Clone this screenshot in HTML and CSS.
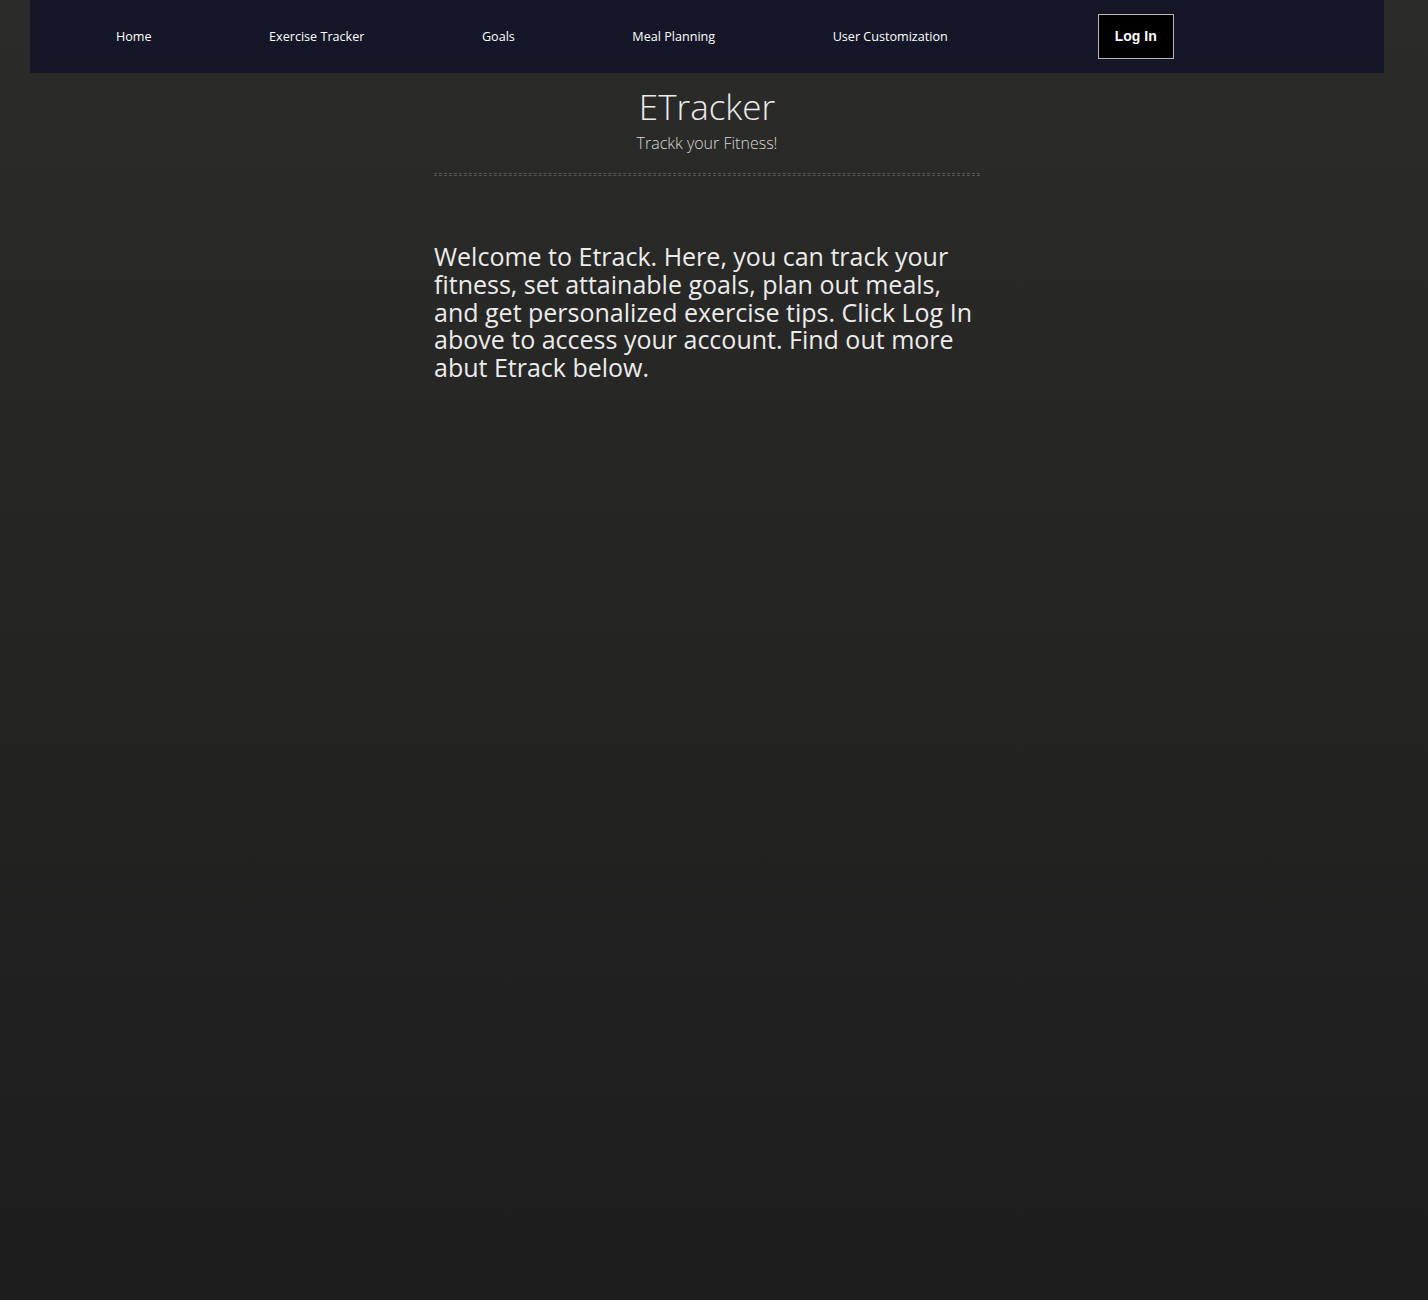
FILE: index.html
```html
<!DOCTYPE html>
<html>
<head>
<meta charset="utf-8">
<link rel="stylesheet" href="styles.css">
</head>
<body>
<div class="page">
  <nav class="nav">
    <a class="nav-link" href="#">Home</a>
    <a class="nav-link" href="#">Exercise Tracker</a>
    <a class="nav-link" href="#">Goals</a>
    <a class="nav-link" href="#">Meal Planning</a>
    <a class="nav-link" href="#">User Customization</a>
    <a class="login" href="#">Log In</a>
  </nav>
  <header class="header">
    <h1 class="title">ETracker</h1>
    <p class="subtitle">Trackk your Fitness!</p>
    <div class="divider"></div>
  </header>
  <main class="main">
    <p class="intro">Welcome to Etrack. Here, you can track your fitness, set attainable goals, plan out meals, and get personalized exercise tips. Click Log In above to access your account. Find out more abut Etrack below.</p>
  </main>
</div>
</body>
</html>
```

FILE: styles.css
```css
html {
  min-height: 100%;
  background: linear-gradient(to bottom, #2b2b29 0%, #1d1d1d 100%);
}
body {
  margin: 0;
  min-height: 1300px;
  font-family: "Open Sans", "DejaVu Sans", sans-serif;
  color: #e8e8e8;
}
.page {
  margin: 0 44px 0 30px;
}
.nav {
  height: 73px;
  background: #151628;
  display: flex;
  align-items: center;
  padding-left: 86px;
  padding-bottom: 1px;
  box-sizing: border-box;
}
.nav-link {
  color: #ffffff;
  text-decoration: none;
  font-size: 12.6px;
  margin-right: 117.5px;
}
.nav-link:nth-of-type(5) {
  margin-right: 150px;
}
.login {
  width: 76px;
  height: 45px;
  box-sizing: border-box;
  border: 1px solid #b8b8b8;
  background: #000;
  color: #fff;
  text-decoration: none;
  font-family: "Liberation Sans", Arial, sans-serif;
  font-weight: bold;
  font-size: 14px;
  display: flex;
  align-items: center;
  justify-content: center;
}
.header {
  width: 546px;
  margin: 0 auto;
  text-align: center;
  padding-top: 13px;
}
.title {
  margin: 0;
  font-size: 35px;
  font-weight: 300;
  line-height: 42px;
  color: #ececec;
}
.subtitle {
  margin: 0;
  font-size: 16px;
  font-weight: 300;
  line-height: 26px;
  color: #d8d8d8;
  margin-top: 2px;
}
.divider {
  margin-top: 17px;
  height: 1px;
  border-top: 1px dashed #555;
  border-bottom: 1px dashed #555;
}
.main {
  width: 546px;
  margin: 0 auto;
}
.intro {
  margin: 67px 0 0;
  font-size: 25px;
  line-height: 27.8px;
  color: #ececec;
}
```
